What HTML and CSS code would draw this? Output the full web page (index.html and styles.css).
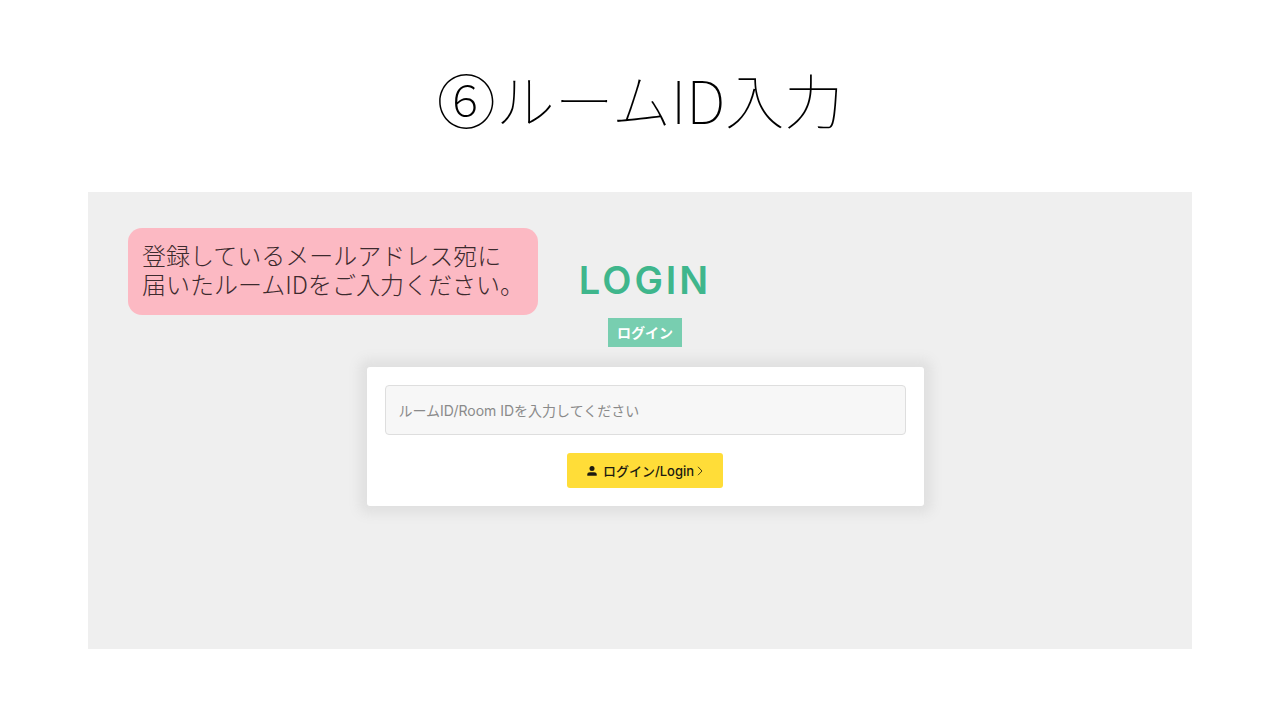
FILE: index.html
```html
<!DOCTYPE html>
<html lang="ja">
<head>
    <meta charset="UTF-8">
    <meta name="viewport" content="width=device-width, initial-scale=1.0">
    <title>⑥ルームID入力</title>
    <link rel="stylesheet" href="styles.css">
</head>
<body>

    <h1>⑥ルームID入力</h1>

    <main class="screen">
        <p class="note">登録しているメールアドレス宛に<br>届いたルームIDをご入力ください。</p>

        <h2>LOGIN</h2>
        <label class="tag" for="roomId">ログイン</label>

        <form class="login-box">
            <input type="text" id="roomId" placeholder="ルームID/Room IDを入力してください">
            <button type="button" class="btn">
                <svg width="10" height="10" viewBox="0 0 10 10" fill="currentColor" aria-hidden="true">
                    <circle cx="5" cy="2.6" r="2.5"/>
                    <path d="M0.3 9.8V8.4C0.3 7 1.4 6.2 2.8 6.2h4.4c1.4 0 2.5.8 2.5 2.2v1.4z"/>
                </svg>
                <span>ログイン/Login</span>
                <svg class="arrow" width="6" height="10" viewBox="0 0 6 10" fill="none" stroke="currentColor" stroke-width="0.8" aria-hidden="true">
                    <path d="M1 0.8l4 4.2-4 4.2"/>
                </svg>
            </button>
        </form>
    </main>

</body>
</html>
```
FILE: styles.css
```css
* {
    box-sizing: border-box;
}
body {
    margin: 0;
    padding: 55px 88px 0;
    font-family: "Noto Sans CJK JP", sans-serif;
    background-color: #fff;
    color: #000;
}
h1 {
    margin: 0 0 49px;
    font-size: 59px;
    font-weight: 100;
    line-height: 88px;
    text-align: center;
}
.screen {
    position: relative;
    display: flex;
    flex-direction: column;
    align-items: center;
    padding: 64px 0 143px 10px;
    background-color: #efefef;
}
.note {
    position: absolute;
    top: 36px;
    left: 40px;
    width: 410px;
    margin: 0;
    padding: 12px 14px 17px;
    border-radius: 14px;
    background-color: #fcb9c3;
    color: #3c2a2e;
    font-size: 24px;
    font-weight: 300;
    line-height: 29px;
    white-space: nowrap;
}
h2 {
    margin: 0 0 14px;
    color: #3fb68c;
    font-family: Inter, sans-serif;
    font-size: 38px;
    font-weight: 600;
    line-height: 48px;
    letter-spacing: 3px;
}
.tag {
    margin-bottom: 20px;
    padding: 0 9px;
    background-color: #78ceb0;
    color: #fff;
    font-size: 14px;
    font-weight: 700;
    line-height: 29px;
}
.login-box {
    display: flex;
    flex-direction: column;
    align-items: center;
    gap: 18px;
    width: 100%;
    max-width: 557px;
    padding: 18px;
    border-radius: 3px;
    background-color: #fff;
    box-shadow: 0 0 12px 8px #e0e0e0;
}
.login-box input {
    width: 100%;
    height: 50px;
    padding: 0 13px;
    border: 1px solid #dedede;
    border-radius: 4px;
    background-color: #f7f7f7;
    font-family: Inter, "Noto Sans CJK JP", sans-serif;
    font-size: 14px;
}
.login-box input::placeholder {
    color: #8a8a8a;
}
.btn {
    display: flex;
    align-items: center;
    justify-content: center;
    height: 35px;
    padding: 0 20px;
    border: none;
    border-radius: 3px;
    background-color: #ffdd38;
    color: #1c1a10;
    font-family: Inter, "Noto Sans CJK JP", sans-serif;
    font-size: 13px;
    font-weight: 500;
    cursor: pointer;
}
.btn span {
    margin-left: 6px;
}
.btn .arrow {
    margin-left: 3px;
}
```
